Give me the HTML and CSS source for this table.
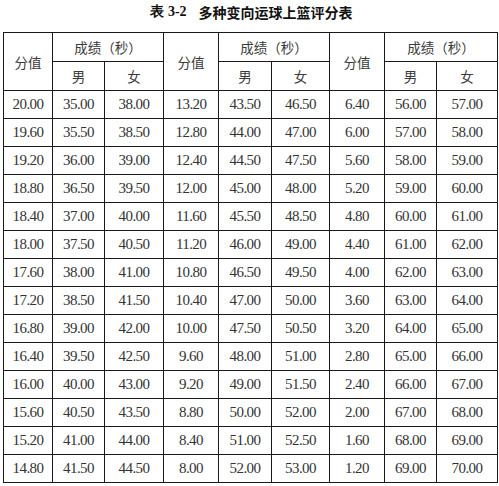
FILE: index.html
```html
<!DOCTYPE html>
<html lang="zh">
<head>
<meta charset="utf-8">
<title>表 3-2 多种变向运球上篮评分表</title>
<link rel="stylesheet" href="styles.css">
</head>
<body>
<div class="title"><span class="num">表 3-2</span><span class="name">多种变向运球上篮评分表</span></div>
<table class="score">
<colgroup>
<col class="c1"><col class="c2"><col class="c3"><col class="c4"><col class="c5"><col class="c6"><col class="c7"><col class="c8"><col class="c9">
</colgroup>
<thead>
<tr class="h1"><th rowspan="2">分值</th><th colspan="2">成绩（秒）</th><th rowspan="2">分值</th><th colspan="2">成绩（秒）</th><th rowspan="2">分值</th><th colspan="2">成绩（秒）</th></tr>
<tr class="h2"><th>男</th><th>女</th><th>男</th><th>女</th><th>男</th><th>女</th></tr>
</thead>
<tbody>
<tr><td>20.00</td><td>35.00</td><td>38.00</td><td>13.20</td><td>43.50</td><td>46.50</td><td>6.40</td><td>56.00</td><td>57.00</td></tr>
<tr><td>19.60</td><td>35.50</td><td>38.50</td><td>12.80</td><td>44.00</td><td>47.00</td><td>6.00</td><td>57.00</td><td>58.00</td></tr>
<tr><td>19.20</td><td>36.00</td><td>39.00</td><td>12.40</td><td>44.50</td><td>47.50</td><td>5.60</td><td>58.00</td><td>59.00</td></tr>
<tr><td>18.80</td><td>36.50</td><td>39.50</td><td>12.00</td><td>45.00</td><td>48.00</td><td>5.20</td><td>59.00</td><td>60.00</td></tr>
<tr><td>18.40</td><td>37.00</td><td>40.00</td><td>11.60</td><td>45.50</td><td>48.50</td><td>4.80</td><td>60.00</td><td>61.00</td></tr>
<tr><td>18.00</td><td>37.50</td><td>40.50</td><td>11.20</td><td>46.00</td><td>49.00</td><td>4.40</td><td>61.00</td><td>62.00</td></tr>
<tr><td>17.60</td><td>38.00</td><td>41.00</td><td>10.80</td><td>46.50</td><td>49.50</td><td>4.00</td><td>62.00</td><td>63.00</td></tr>
<tr><td>17.20</td><td>38.50</td><td>41.50</td><td>10.40</td><td>47.00</td><td>50.00</td><td>3.60</td><td>63.00</td><td>64.00</td></tr>
<tr><td>16.80</td><td>39.00</td><td>42.00</td><td>10.00</td><td>47.50</td><td>50.50</td><td>3.20</td><td>64.00</td><td>65.00</td></tr>
<tr><td>16.40</td><td>39.50</td><td>42.50</td><td>9.60</td><td>48.00</td><td>51.00</td><td>2.80</td><td>65.00</td><td>66.00</td></tr>
<tr><td>16.00</td><td>40.00</td><td>43.00</td><td>9.20</td><td>49.00</td><td>51.50</td><td>2.40</td><td>66.00</td><td>67.00</td></tr>
<tr><td>15.60</td><td>40.50</td><td>43.50</td><td>8.80</td><td>50.00</td><td>52.00</td><td>2.00</td><td>67.00</td><td>68.00</td></tr>
<tr><td>15.20</td><td>41.00</td><td>44.00</td><td>8.40</td><td>51.00</td><td>52.50</td><td>1.60</td><td>68.00</td><td>69.00</td></tr>
<tr><td>14.80</td><td>41.50</td><td>44.50</td><td>8.00</td><td>52.00</td><td>53.00</td><td>1.20</td><td>69.00</td><td>70.00</td></tr>
</tbody>
</table>
</body>
</html>
```

FILE: styles.css
```css
html, body {
  margin: 0;
  padding: 0;
  background: #fff;
}
body {
  width: 499px;
  font-family: "Liberation Serif", "Noto Sans CJK SC", serif;
  color: #333;
}
.title {
  height: 32px;
  display: flex;
  justify-content: center;
  align-items: center;
  padding-bottom: 9px;
  padding-left: 4px;
  box-sizing: border-box;
  font-size: 14px;
  font-weight: bold;
  color: #111;
}
.title .num {
  font-family: "Liberation Serif", serif;
  margin-right: 12px;
}
.title .name {
  font-family: "Noto Sans CJK SC", sans-serif;
}
.score {
  margin-left: 3px;
  width: 494px;
  border-collapse: collapse;
  table-layout: fixed;
}
.c1 { width: 49px; }
.c2 { width: 52px; }
.c3 { width: 59px; }
.c4 { width: 55px; }
.c5 { width: 53px; }
.c6 { width: 58px; }
.c7 { width: 55px; }
.c8 { width: 52px; }
.c9 { width: 61px; }
.score th, .score td {
  border: 1px solid #1a1a1a;
  padding: 0;
  text-align: center;
  vertical-align: middle;
}
.score th {
  font-family: "Noto Sans CJK SC", sans-serif;
  font-weight: normal;
  font-size: 13.5px;
  color: #3a3a3a;
}
.score td {
  font-size: 15px;
  letter-spacing: -0.6px;
  color: #333;
}
.h1, .h2 {
  height: 29px;
}
.score tbody tr {
  height: 28px;
}
```
